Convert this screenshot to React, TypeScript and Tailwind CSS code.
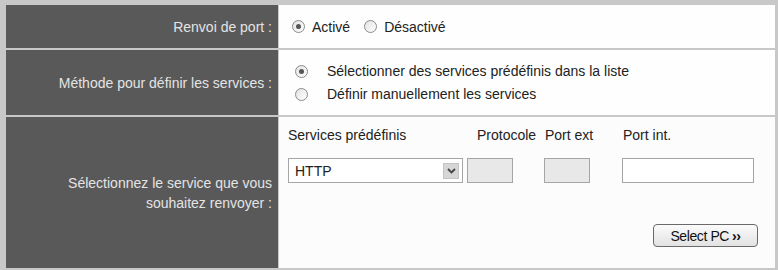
import React from "react";

function Radio({ checked }: { checked?: boolean }) {
  return (
    <span className="inline-flex shrink-0 items-center justify-center w-[13px] h-[13px] rounded-full border border-[#8a8a8a] bg-gradient-to-br from-[#e2e2e2] to-[#ffffff]">
      {checked && <span className="block w-[5px] h-[5px] rounded-full bg-[#555555]" />}
    </span>
  );
}

export default function App() {
  const font = { fontFamily: '"Liberation Sans", Arial, sans-serif' };
  return (
    <div
      className="w-[778px] h-[270px] bg-[#c8c8c8] pt-[5px] pl-[6px] pr-[3px] pb-[2px] flex flex-col gap-[2px] text-[14px] leading-[16px] overflow-hidden"
      style={font}
    >
      {/* Row 1 */}
      <div className="flex h-[43px] gap-[1px]">
        <div className="w-[272px] bg-[#595959] text-[#e4e4e4] flex items-center justify-end pr-[6px]">
          Renvoi de port :
        </div>
        <div className="flex-1 bg-[#fefefe] flex items-center pl-[13px] text-[#222]">
          <Radio checked />
          <span className="ml-[7px]">Activé</span>
          <span className="ml-[14px] flex"><Radio /></span>
          <span className="ml-[7px]">Désactivé</span>
        </div>
      </div>
      {/* Row 2 */}
      <div className="flex h-[65px] gap-[1px]">
        <div className="w-[272px] bg-[#595959] text-[#e4e4e4] flex items-center justify-end pr-[6px]">
          Méthode pour définir les services :
        </div>
        <div className="flex-1 bg-[#fefefe] flex flex-col justify-center gap-[7px] pl-[16px] text-[#222]">
          <div className="flex items-center">
            <Radio checked />
            <span className="ml-[19px]">Sélectionner des services prédéfinis dans la liste</span>
          </div>
          <div className="flex items-center">
            <Radio />
            <span className="ml-[19px]">Définir manuellement les services</span>
          </div>
        </div>
      </div>
      {/* Row 3 */}
      <div className="flex flex-1 gap-[1px]">
        <div className="w-[272px] bg-[#595959] text-[#e4e4e4] flex items-center justify-end pr-[6px] text-right leading-[20px]">
          <div>
            Sélectionnez le service que vous
            <br />
            souhaitez renvoyer :
          </div>
        </div>
        <div className="flex-1 bg-[#fcfcfc] flex flex-col pl-[9px] pt-[10px] text-[#222]">
          <div className="flex h-[16px] items-center">
            <span className="w-[189px]">Services prédéfinis</span>
            <span className="w-[68px]">Protocole</span>
            <span className="w-[78px]">Port ext</span>
            <span>Port int.</span>
          </div>
          <div className="flex mt-[15px] h-[25px] items-stretch">
            <div className="w-[175px] border border-[#a5a5a5] bg-white flex items-center justify-between pl-[6px] pr-[3px] text-[14px]">
              <span>HTTP</span>
              <span className="w-[16px] h-[16px] bg-[#d6d6d6] border border-[#c4c4c4] flex items-center justify-center">
                <svg width="9" height="6" viewBox="0 0 9 6">
                  <path d="M1 1 L4.5 4.5 L8 1" stroke="#444" strokeWidth="1.8" fill="none" />
                </svg>
              </span>
            </div>
            <div className="ml-[4px] w-[46px] border border-[#a5a5a5] bg-[#e8e8e8]" />
            <div className="ml-[31px] w-[46px] border border-[#a5a5a5] bg-[#e8e8e8]" />
            <div className="ml-[32px] w-[132px] border border-[#a5a5a5] bg-white" />
          </div>
          <div className="flex justify-end mt-[41px] pr-[17px]">
            <button className="w-[105px] h-[23px] rounded-[4px] border border-[#6a6a6a] bg-gradient-to-b from-[#fbfbfb] to-[#e2e2e2] text-[14px] text-[#111] flex items-center justify-center tracking-[-0.4px]">
              Select PC<span className="ml-[3px] font-bold text-[14px]">››</span>
            </button>
          </div>
        </div>
      </div>
    </div>
  );
}
